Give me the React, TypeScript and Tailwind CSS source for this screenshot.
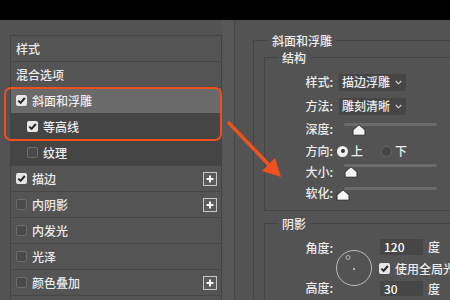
import type { ReactNode } from 'react';

const FONT = "font-['Noto_Sans_CJK_SC','Noto_Sans',sans-serif]";

function Check({ on }: { on: boolean }) {
  return on ? (
    <span className="w-[11px] h-[11px] rounded-[2px] bg-[#e6e6e6] flex items-center justify-center flex-shrink-0">
      <svg width="9" height="9" viewBox="0 0 9 9">
        <path d="M1.3 4.6 L3.6 6.9 L7.8 2" fill="none" stroke="#262626" strokeWidth="2" />
      </svg>
    </span>
  ) : (
    <span className="w-[11px] h-[11px] rounded-[2px] bg-[#4a4a4a] border border-[#6c6c6c] flex-shrink-0" />
  );
}

function Plus() {
  return (
    <span className="w-[14px] h-[14px] border border-[#c8c8c8] bg-[#5b5b5b] flex items-center justify-center">
      <svg width="10" height="10" viewBox="0 0 10 10">
        <path d="M5 1.5 V8.5 M1.5 5 H8.5" stroke="#f2f2f2" strokeWidth="2" />
      </svg>
    </span>
  );
}

type Row = { label: string; check?: boolean; indent?: boolean; plus?: boolean; tone?: 'hi' | 'dark' };

const ROWS: Row[] = [
  { label: '样式' },
  { label: '混合选项' },
  { label: '斜面和浮雕', check: true, tone: 'hi' },
  { label: '等高线', check: true, indent: true, tone: 'dark' },
  { label: '纹理', check: false, indent: true, tone: 'dark' },
  { label: '描边', check: true, plus: true },
  { label: '内阴影', check: false, plus: true },
  { label: '内发光', check: false },
  { label: '光泽', check: false },
  { label: '颜色叠加', check: false, plus: true },
  { label: '', check: false },
];

function Label({ children }: { children: ReactNode }) {
  return <span className="w-[69px] text-right pr-[1px] flex-shrink-0">{children}</span>;
}

function Dropdown({ text }: { text: string }) {
  return (
    <span className="ml-[5px] w-[67px] h-[17px] bg-[#464646] flex items-center justify-between pl-[3px] pr-[4px]">
      <span>{text}</span>
      <svg width="7" height="5" viewBox="0 0 7 5">
        <path d="M0.8 1 L3.5 3.8 L6.2 1" fill="none" stroke="#d8d8d8" strokeWidth="1.1" />
      </svg>
    </span>
  );
}

function Slider({ trackTop, thumbTop, thumbLeft }: { trackTop: string; thumbTop: string; thumbLeft: string }) {
  return (
    <span className="ml-[5px] relative w-[98px] h-full">
      <span className={`absolute left-[5px] right-0 h-[3px] rounded-full bg-[#6b6b6b] ${trackTop}`} />
      <svg className={`absolute ${thumbTop} ${thumbLeft}`} width="14" height="12" viewBox="0 0 14 12">
        <path d="M7 0.8 L13 6 L13 11.2 L1 11.2 L1 6 Z" fill="#f4f4f4" stroke="#2e2e2e" strokeWidth="1" strokeLinejoin="round" />
      </svg>
    </span>
  );
}

export default function App() {
  return (
    <div className={`relative w-[450px] h-[300px] overflow-hidden bg-[#535353] text-[12px] font-medium text-[#ececec] ${FONT} flex flex-col`}>
      <div className="h-[20px] bg-black flex-shrink-0" />

      <div className="flex flex-1 min-h-0">
        {/* Style list */}
        <div className="ml-[10px] mt-[15px] w-[212px] border-t border-l border-r border-[#434343] flex flex-col">
          {ROWS.map((r, i) => (
            <div
              key={i}
              className={`h-[26px] flex-shrink-0 flex items-center border-b border-[#464646] ${
                r.tone === 'hi' ? 'bg-[#6a6a6a]' : r.tone === 'dark' ? 'bg-[#454545]' : 'bg-[#545454]'
              } ${r.indent ? 'pl-[16px]' : 'pl-[5px]'} pr-[4px]`}
            >
              {r.check !== undefined && <Check on={r.check} />}
              <span className={`${r.check !== undefined ? 'ml-[5px]' : ''} flex-1 leading-none`}>{r.label}</span>
              {r.plus && <Plus />}
            </div>
          ))}
        </div>

        <div className="w-[13px] bg-[#575757] border-r border-[#464646] flex-shrink-0" />

        {/* Options */}
        <div className="flex-1 min-w-0">
          <fieldset className="ml-[18px] mt-[12px] w-[220px] border border-[#444444] p-0">
            <legend className="ml-[14px] px-[4px] leading-[17px]">斜面和浮雕</legend>

            <fieldset className="ml-[10px] w-[210px] border border-[#444444] p-0 pb-[7px]">
              <legend className="ml-[13px] px-[4px] leading-[17px]">结构</legend>
              <div className="h-[24px] mt-[4px] flex items-center">
                <Label>样式:</Label>
                <Dropdown text="描边浮雕" />
              </div>
              <div className="h-[24px] flex items-center">
                <Label>方法:</Label>
                <Dropdown text="雕刻清晰" />
              </div>
              <div className="h-[22px] flex items-center">
                <Label>深度:</Label>
                <Slider trackTop="top-[5px]" thumbTop="top-[6px]" thumbLeft="left-[13px]" />
              </div>
              <div className="h-[22px] flex items-center">
                <Label>方向:</Label>
                <span className="ml-[3px] w-[11px] h-[11px] rounded-full bg-[#efefef] flex items-center justify-center">
                  <span className="w-[4px] h-[4px] rounded-full bg-[#333]" />
                </span>
                <span className="ml-[3px]">上</span>
                <span className="ml-[18px] w-[11px] h-[11px] rounded-full bg-[#454545] border border-[#666]" />
                <span className="ml-[3px]">下</span>
              </div>
              <div className="h-[20px] flex items-center">
                <Label>大小:</Label>
                <Slider trackTop="top-[2px]" thumbTop="top-[4px]" thumbLeft="left-[5px]" />
              </div>
              <div className="h-[21px] flex items-center">
                <Label>软化:</Label>
                <Slider trackTop="top-[5px]" thumbTop="top-[7px]" thumbLeft="left-[-3px]" />
              </div>
            </fieldset>

            <fieldset className="ml-[10px] mt-[4px] w-[210px] h-[120px] border border-[#444444] p-0">
              <legend className="ml-[13px] px-[4px] leading-[17px]">阴影</legend>
              <div className="flex pt-[6px]">
                <div className="flex flex-col">
                  <div className="h-[20px] flex items-center"><Label>角度:</Label></div>
                  <div className="h-[20px] mt-[20px] flex items-center"><Label>高度:</Label></div>
                </div>
                <svg className="ml-[1px] mt-[10px] flex-shrink-0" width="40" height="40" viewBox="0 0 40 40">
                  <circle cx="19" cy="20" r="17.5" fill="none" stroke="#bdbdbd" strokeWidth="1" />
                  <circle cx="13" cy="9.5" r="2" fill="none" stroke="#bdbdbd" strokeWidth="0.9" />
                  <circle cx="19" cy="21" r="1" fill="#cfcfcf" />
                </svg>
                <div className="ml-[5px] flex flex-col">
                  <div className="mt-[1px] h-[16px] flex items-center">
                    <span className="w-[43px] h-[16px] bg-[#464646] pl-[4px] flex items-center text-white">120</span>
                    <span className="ml-[5px]">度</span>
                  </div>
                  <div className="mt-[8px] h-[11px] flex items-center -ml-[1px]">
                    <Check on={true} />
                    <span className="ml-[5px] whitespace-nowrap">使用全局光</span>
                  </div>
                  <div className="mt-[7px] h-[15px] flex items-center">
                    <span className="w-[43px] h-[15px] bg-[#464646] pl-[4px] flex items-center text-white">30</span>
                    <span className="ml-[5px]">度</span>
                  </div>
                </div>
              </div>
            </fieldset>
          </fieldset>
        </div>
      </div>

      {/* Orange annotation */}
      <div className="absolute left-[4px] top-[87px] w-[218px] h-[54px] rounded-[7px] border-[2.5px] border-[#ef4e1e]" />
      <svg className="absolute left-0 top-0 pointer-events-none" width="450" height="300" viewBox="0 0 450 300">
        <path d="M228 122 L270 166" stroke="#f0521f" strokeWidth="3.5" />
        <path d="M281 177 L262 171 L275 158 Z" fill="#f0521f" />
      </svg>
    </div>
  );
}
